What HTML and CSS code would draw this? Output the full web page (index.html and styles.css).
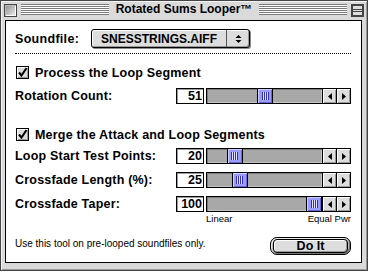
FILE: index.html
```html
<!DOCTYPE html>
<html lang="en">
<head>
    <meta charset="UTF-8">
    <meta name="viewport" content="width=device-width, initial-scale=1.0">
    <title>Rotated Sums Looper</title>
    <link rel="stylesheet" href="styles.css">
</head>
<body>
    <div class="window">
        <div class="titlebar">
            <span class="closebox"></span>
            <span class="stripes"></span>
            <span class="title">Rotated Sums Looper™</span>
            <span class="stripes"></span>
            <span class="shadebox">
                <svg width="11" height="11" viewBox="0 0 11 11">
                    <rect x="0.5" y="0.5" width="10" height="10" fill="#ddd" stroke="#444"/>
                    <line x1="0" y1="4.5" x2="11" y2="4.5" stroke="#444"/>
                    <line x1="0" y1="6.5" x2="11" y2="6.5" stroke="#444"/>
                </svg>
            </span>
        </div>

        <div class="content">
            <div class="file-row">
                <span class="file-label">Soundfile:</span>
                <div class="popup">
                    <span class="popup-text">SNESSTRINGS.AIFF</span>
                    <span class="popup-arrows">
                        <svg width="7" height="10" viewBox="0 0 7 10">
                            <polygon points="0.5,4 3.5,1 6.5,4" fill="#000"/>
                            <polygon points="0.5,6 3.5,9 6.5,6" fill="#000"/>
                        </svg>
                    </span>
                </div>
            </div>

            <div class="separator"></div>

            <div class="check-row first">
                <span class="checkbox">
                    <svg width="13" height="13" viewBox="0 0 13 13">
                        <path d="M3 6.5 L5.5 9.5 L10.5 2" fill="none" stroke="#000" stroke-width="2"/>
                    </svg>
                </span>
                Process the Loop Segment
            </div>

            <div class="slider-row single">
                <span class="slider-label">Rotation Count:</span>
                <span class="field">51</span>
                <div class="scrollbar">
                    <div class="track"><span class="thumb" style="--v: 51"><span class="grip"></span></span></div>
                    <span class="arrow"><svg width="4" height="7" viewBox="0 0 4 7"><polygon points="4,0 4,7 0,3.5" fill="#000"/></svg></span>
                    <span class="arrow"><svg width="4" height="7" viewBox="0 0 4 7"><polygon points="0,0 0,7 4,3.5" fill="#000"/></svg></span>
                </div>
            </div>

            <div class="check-row second">
                <span class="checkbox">
                    <svg width="13" height="13" viewBox="0 0 13 13">
                        <path d="M3 6.5 L5.5 9.5 L10.5 2" fill="none" stroke="#000" stroke-width="2"/>
                    </svg>
                </span>
                Merge the Attack and Loop Segments
            </div>

            <div class="slider-row">
                <span class="slider-label">Loop Start Test Points:</span>
                <span class="field">20</span>
                <div class="scrollbar">
                    <div class="track"><span class="thumb" style="--v: 20"><span class="grip"></span></span></div>
                    <span class="arrow"><svg width="4" height="7" viewBox="0 0 4 7"><polygon points="4,0 4,7 0,3.5" fill="#000"/></svg></span>
                    <span class="arrow"><svg width="4" height="7" viewBox="0 0 4 7"><polygon points="0,0 0,7 4,3.5" fill="#000"/></svg></span>
                </div>
            </div>

            <div class="slider-row">
                <span class="slider-label">Crossfade Length (%):</span>
                <span class="field">25</span>
                <div class="scrollbar">
                    <div class="track"><span class="thumb" style="--v: 25"><span class="grip"></span></span></div>
                    <span class="arrow"><svg width="4" height="7" viewBox="0 0 4 7"><polygon points="4,0 4,7 0,3.5" fill="#000"/></svg></span>
                    <span class="arrow"><svg width="4" height="7" viewBox="0 0 4 7"><polygon points="0,0 0,7 4,3.5" fill="#000"/></svg></span>
                </div>
            </div>

            <div class="slider-row">
                <span class="slider-label">Crossfade Taper:</span>
                <span class="field">100</span>
                <div class="scrollbar">
                    <div class="track"><span class="thumb" style="--v: 100"><span class="grip"></span></span></div>
                    <span class="arrow"><svg width="4" height="7" viewBox="0 0 4 7"><polygon points="4,0 4,7 0,3.5" fill="#000"/></svg></span>
                    <span class="arrow"><svg width="4" height="7" viewBox="0 0 4 7"><polygon points="0,0 0,7 4,3.5" fill="#000"/></svg></span>
                </div>
            </div>

            <div class="scale">
                <span>Linear</span>
                <span>Equal Pwr</span>
            </div>

            <div class="bottom-row">
                <span class="note">Use this tool on pre-looped soundfiles only.</span>
                <div class="default-ring">
                    <button class="do-it">Do It</button>
                </div>
            </div>
        </div>
    </div>
</body>
</html>
```

FILE: styles.css
```css
body {
    margin: 0;
    background-color: #fff;
    font-family: "Liberation Sans", Arial, sans-serif;
    color: #000;
}

/* window frame */
.window {
    width: 368px;
    box-sizing: border-box;
    border: 1px solid #444;
    background-color: #dadada;
    box-shadow: inset 1px 1px #f4f4f4, inset -1px -1px #999;
    padding-bottom: 7px;
}
.titlebar {
    height: 19px;
    display: flex;
    align-items: flex-start;
    padding: 0 3px;
}
.closebox {
    width: 13px;
    height: 13px;
    margin-top: 3px;
    box-sizing: border-box;
    border: 1px solid #444;
    background: linear-gradient(135deg, #8a8a8a, #f2f2f2);
    box-shadow: inset 1px 1px #bbb, inset -1px -1px #fff;
}
.shadebox {
    width: 13px;
    height: 13px;
    margin-top: 3px;
    box-sizing: border-box;
    border: 1px solid #444;
    background-color: #ddd;
}
.shadebox svg {
    display: block;
}
.stripes {
    flex: 1;
    height: 11px;
    margin: 3px 4px 0;
    background: repeating-linear-gradient(to bottom, #7a7a7a 0 1px, #fff 1px 2px);
}
.title {
    font-weight: bold;
    font-size: 12px;
    line-height: 19px;
    margin: -1px 3px 0;
}

/* content */
.content {
    margin: 0 5px 0 4px;
    height: 243px;
    box-sizing: border-box;
    border: 1px solid #000;
    background-color: #fff;
    padding: 0 10px 0 9px;
    font-size: 12.5px;
    font-weight: bold;
}
.file-row {
    display: flex;
    align-items: center;
    height: 19px;
    margin-top: 8px;
}
.file-label {
    width: 76px;
    letter-spacing: 0.3px;
}
.popup {
    width: 159px;
    height: 19px;
    box-sizing: border-box;
    border: 1px solid #000;
    border-radius: 3px;
    background-color: #ddd;
    box-shadow: inset 1px 1px #fff, inset -1px -1px #999, 1px 1px 0 #888;
    display: flex;
    align-items: center;
    font-size: 12px;
}
.popup-text {
    flex: 1;
    padding-left: 9px;
}
.popup-arrows {
    width: 22px;
    height: 100%;
    border-left: 1px solid #555;
    display: flex;
    align-items: center;
    justify-content: center;
}
.separator {
    margin-top: 5px;
    border-top: 1px dotted #000;
}

.check-row {
    display: flex;
    align-items: center;
    height: 13px;
    letter-spacing: 0.2px;
}
.check-row.first {
    margin-top: 12px;
}
.check-row.second {
    margin-top: 24px;
}
.checkbox {
    width: 13px;
    height: 13px;
    box-sizing: border-box;
    margin: 0 6px 0 1px;
    border: 1px solid #000;
    background-color: #ddd;
    box-shadow: inset 1px 1px #fff, inset -1px -1px #999;
    position: relative;
}
.checkbox svg {
    position: absolute;
    left: -1px;
    top: -1px;
}

/* slider rows */
.slider-row {
    display: flex;
    align-items: center;
    height: 16px;
    margin-top: 8px;
}
.slider-row.single {
    margin-top: 9px;
}
.check-row.second + .slider-row {
    margin-top: 7px;
}
.slider-label {
    flex: 1;
    letter-spacing: 0.2px;
}
.field {
    width: 28px;
    height: 16px;
    box-sizing: border-box;
    border: 1px solid #000;
    box-shadow: inset 1px 1px #999;
    text-align: right;
    padding-right: 1px;
    line-height: 14px;
    margin-right: 2px;
}
.scrollbar {
    width: 145px;
    height: 16px;
    box-sizing: border-box;
    border: 1px solid #000;
    display: flex;
}
.track {
    flex: 1;
    position: relative;
    background-color: #a8a8a8;
    box-shadow: inset 1px 1px #7c7c7c, inset -1px -1px #c4c4c4;
}
.thumb {
    position: absolute;
    top: 0;
    bottom: 0;
    left: calc((100% - 16px) * var(--v) / 100);
    width: 16px;
    box-sizing: border-box;
    border-left: 1px solid #000;
    border-right: 1px solid #000;
    background-color: #9c9cff;
    box-shadow: inset 1px 1px #ccccff, inset -1px -1px #6666dd;
    display: flex;
    align-items: center;
    justify-content: center;
}
.grip {
    width: 7px;
    height: 8px;
    background: repeating-linear-gradient(to right, #3030b0 0 1px, #e0e0ff 1px 2px);
}
.arrow {
    width: 14px;
    box-sizing: border-box;
    border-left: 1px solid #000;
    background-color: #ddd;
    box-shadow: inset 1px 1px #fff, inset -1px -1px #999;
    display: flex;
    align-items: center;
    justify-content: center;
}
.arrow svg {
    display: block;
}

.scale {
    width: 145px;
    margin: 1px 0 0 auto;
    display: flex;
    justify-content: space-between;
    font-weight: normal;
    font-size: 9.5px;
    line-height: 11px;
}

/* bottom */
.bottom-row {
    display: flex;
    justify-content: space-between;
    align-items: center;
    margin-top: 13px;
}
.note {
    font-weight: normal;
    font-size: 10px;
    margin-top: -6px;
}
.default-ring {
    width: 81px;
    height: 18px;
    box-sizing: border-box;
    border: 1px solid #000;
    border-radius: 7px;
    padding: 1px 2px;
    background-color: #bbb;
    box-shadow: inset 1px 1px #eee, inset -1px -1px #777;
}
.do-it {
    display: flex;
    align-items: center;
    justify-content: center;
    width: 100%;
    height: 100%;
    padding: 0;
    border: 1px solid #000;
    border-radius: 4px;
    background-color: #ddd;
    box-shadow: inset 1px 1px #fff, inset -1px -1px #999;
    font-family: "Liberation Sans", Arial, sans-serif;
    font-weight: bold;
    font-size: 12.5px;
    line-height: 12px;
    color: #000;
}
```
